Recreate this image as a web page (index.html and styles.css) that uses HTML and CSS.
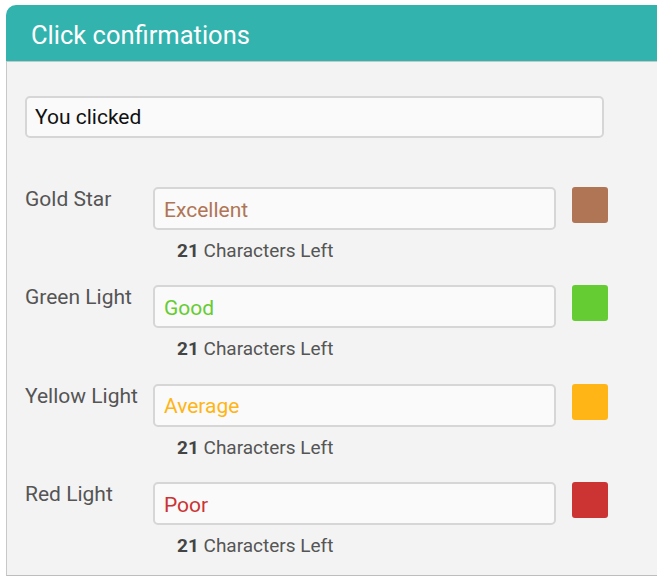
FILE: index.html
```html
<!DOCTYPE html>
<html>
<head>
<meta charset="utf-8">
<link rel="stylesheet" href="styles.css">
</head>
<body>
<div class="panel">
  <div class="panel-header">Click confirmations</div>
  <div class="panel-body">
    <input class="field field-main" type="text" value="You clicked">
    <div class="rows">
      <div class="row">
        <div class="label">Gold Star</div>
        <input class="field field-brown" type="text" value="Excellent">
        <div class="swatch swatch-brown"></div>
        <div class="helper"><b>21</b> Characters Left</div>
      </div>
      <div class="row">
        <div class="label">Green Light</div>
        <input class="field field-green" type="text" value="Good">
        <div class="swatch swatch-green"></div>
        <div class="helper"><b>21</b> Characters Left</div>
      </div>
      <div class="row">
        <div class="label">Yellow Light</div>
        <input class="field field-yellow" type="text" value="Average">
        <div class="swatch swatch-yellow"></div>
        <div class="helper"><b>21</b> Characters Left</div>
      </div>
      <div class="row">
        <div class="label">Red Light</div>
        <input class="field field-red" type="text" value="Poor">
        <div class="swatch swatch-red"></div>
        <div class="helper"><b>21</b> Characters Left</div>
      </div>
    </div>
  </div>
</div>
</body>
</html>
```

FILE: styles.css
```css
html, body {
  margin: 0;
  padding: 0;
  background: #ffffff;
  overflow: hidden;
  font-family: Roboto, "Liberation Sans", sans-serif;
}

.panel {
  margin: 5px 0 0 6px;
  border-top-left-radius: 10px;
  overflow: hidden;
}

.panel-header {
  background: #33b3ae;
  color: #ffffff;
  font-size: 25.5px;
  line-height: 30px;
  box-sizing: border-box;
  padding: 14.5px 0 0 25px;
  border-bottom: 1px solid #c6c6c6;
  height: 57px;
}

.panel-body {
  background: #f3f3f3;
  border-left: 1px solid #c8c8c8;
  border-bottom: 1px solid #bdbdbd;
  height: 514px;
  box-sizing: border-box;
  padding: 34px 0 0 18px;
}

.field {
  display: block;
  box-sizing: border-box;
  height: 43px;
  border: 2px solid #d6d6d6;
  border-radius: 5px;
  background: #fafafa;
  font-family: Roboto, "Liberation Sans", sans-serif;
  font-size: 21px;
  padding: 2px 0 0 9px;
  margin: 0;
  outline: none;
}

.field-main {
  width: 579px;
  height: 42px;
  color: #111111;
  padding: 0 0 0 8px;
}

.rows {
  margin-top: 49px;
  display: flex;
  flex-direction: column;
  gap: 23.4px;
}

.row {
  display: grid;
  grid-template-columns: 112px 403px 36px;
  column-gap: 16px;
  row-gap: 10px;
}

.label {
  font-size: 21px;
  line-height: 24px;
  color: #555555;
  white-space: nowrap;
  grid-row: 1 / span 2;
}

.row .field {
  width: 403px;
}

.swatch {
  width: 36px;
  height: 36px;
  border-radius: 3px;
}

.helper {
  grid-column: 2;
  padding-left: 24px;
  font-size: 19px;
  line-height: 22px;
  color: #555555;
}

.helper b {
  color: #444444;
}

.field-brown { color: #b07555; }
.field-green { color: #66cc33; }
.field-yellow { color: #ffb515; }
.field-red { color: #cc3333; }

.swatch-brown { background: #b07555; }
.swatch-green { background: #66cc33; }
.swatch-yellow { background: #ffb515; }
.swatch-red { background: #cc3333; }
```
